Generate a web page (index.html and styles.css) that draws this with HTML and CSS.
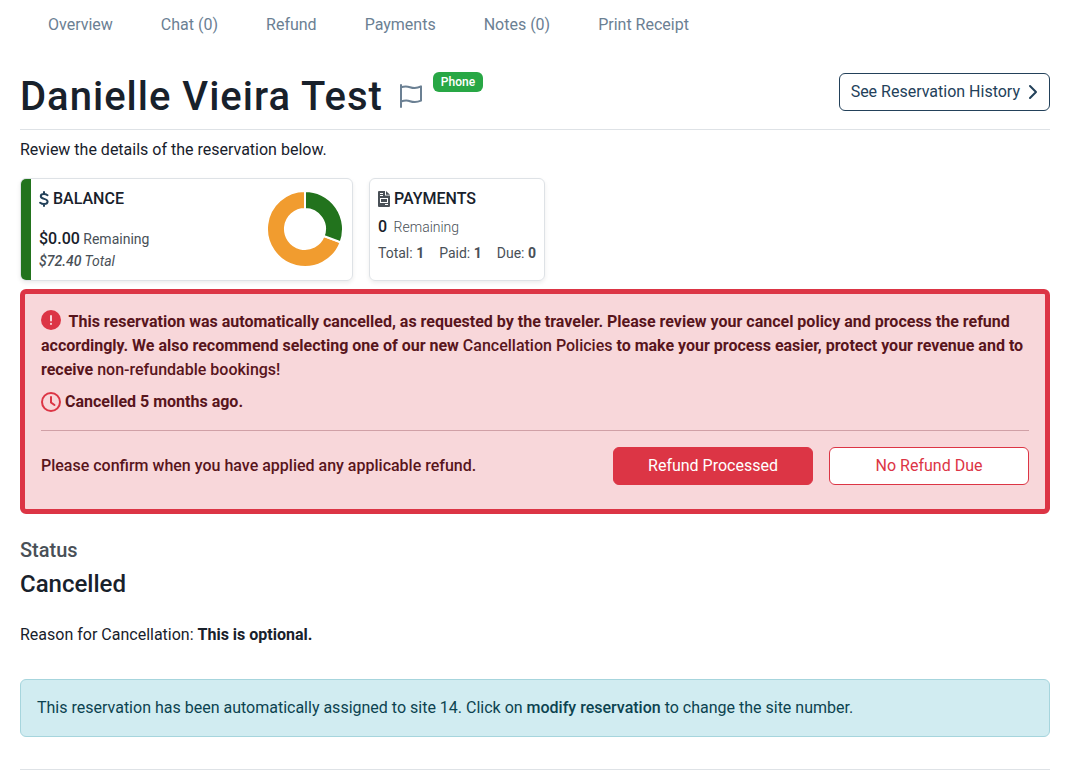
FILE: index.html
```html
<!DOCTYPE html>
<html lang="en">
<head>
    <meta charset="UTF-8">
    <meta name="viewport" content="width=device-width, initial-scale=1">
    <title>Reservation Overview</title>
    <link rel="stylesheet" href="styles.css">
</head>
<body>
    <nav class="tabs">
        <a href="#overview">Overview</a>
        <a href="#chat">Chat (0)</a>
        <a href="#refund">Refund</a>
        <a href="#payments">Payments</a>
        <a href="#notes">Notes (0)</a>
        <a href="#receipt">Print Receipt</a>
    </nav>

    <main class="page">
        <header class="page-header">
            <h1>Danielle Vieira Test</h1>
            <button type="button" class="flag-btn" aria-label="Flag guest">
                <svg width="24" height="26" viewBox="0 0 24 26" fill="none" stroke="currentColor" stroke-width="2" stroke-linecap="round" stroke-linejoin="round">
                    <path d="M2 2v22M2 4.300c3-1 5.500-1.300 9-.1 4.500 1.500 7.500 1 11-.8v14.300c-4 1.800-7 2-11 .5-3-1.100-6-.7-9 .3"/>
                </svg>
            </button>
            <span class="badge">Phone</span>
            <a href="#history" class="btn btn-outline history">
                See Reservation History
                <svg width="10" height="16" viewBox="0 0 10 16" fill="none" stroke="currentColor" stroke-width="2" stroke-linecap="round" stroke-linejoin="round">
                    <path d="M2 2l6 6-6 6"/>
                </svg>
            </a>
        </header>
        <p class="intro">Review the details of the reservation below.</p>

        <div class="cards">
            <section class="card balance">
                <div class="card-text">
                    <h2>
                        <svg class="dollar" width="10" height="16" viewBox="0 0 10 16" fill="none" stroke="currentColor" stroke-width="2" stroke-linecap="round">
                            <path d="M5 1v2M5 13v2M8.500 4.200C7.500 3.500 6.200 3 5 3 3.200 3 1.800 3.800 1.800 5.300c0 3.400 6.800 1.800 6.800 5.200C8.600 12.200 7 13 5 13c-1.500 0-2.900-.6-3.800-1.300"/>
                        </svg>
                        BALANCE
                    </h2>
                    <p class="amount"><strong>$0.00</strong> Remaining</p>
                    <p class="total"><em><strong>$72.40</strong> Total</em></p>
                </div>
                <svg class="donut" width="76" height="76" viewBox="0 0 76 76">
                    <path fill="#f19c2f" stroke="#fff" stroke-width="2" d="M38 0A38 38 0 1 0 73.600 51.300L56.700 45A20 20 0 1 1 38 18z"/>
                    <path fill="#22731d" stroke="#fff" stroke-width="2" d="M38 0A38 38 0 0 1 73.600 51.300L56.700 45A20 20 0 0 0 38 18z"/>
                </svg>
            </section>
            <section class="card payments">
                <h2>
                    <svg class="invoice" width="12" height="16" viewBox="0 0 12 16">
                        <path fill="currentColor" fill-rule="evenodd" d="M1 0h6v4.500h5V15a1 1 0 0 1-1 1H1a1 1 0 0 1-1-1V1a1 1 0 0 1 1-1zM2 2v1h3V2zM2 4v1h3V4zM2 7v5h8V7zM3 8h6v3H3zM7 13v1h3v-1z"/>
                        <path fill="currentColor" d="M8 0l4 3.700H8z"/>
                    </svg>
                    PAYMENTS
                </h2>
                <p class="count"><strong>0</strong> <span>Remaining</span></p>
                <p class="stats">
                    <span>Total: <strong>1</strong></span>
                    <span>Paid: <strong>1</strong></span>
                    <span>Due: <strong>0</strong></span>
                </p>
            </section>
        </div>

        <section class="alert alert-danger">
            <p>
                <svg class="exclaim" width="20" height="20" viewBox="0 0 20 20">
                    <circle cx="10" cy="10" r="10" fill="#dc3545"/>
                    <path d="M10 6v4.500M10 13.800v.2" stroke="#f8d7da" stroke-width="2" stroke-linecap="round"/>
                </svg>
                This reservation was automatically cancelled, as requested by the traveler. Please review your cancel policy and process the refund accordingly. We also recommend selecting one of our new <a href="#policies">Cancellation Policies</a> to make your process easier, protect your revenue and to receive <a href="#non-refundable">non-refundable bookings!</a>
            </p>
            <p class="when">
                <svg width="20" height="20" viewBox="0 0 20 20" fill="none" stroke="#dc3545" stroke-width="2" stroke-linecap="round">
                    <circle cx="10" cy="10" r="9"/>
                    <path d="M10 5v5.500l3.500 2.500"/>
                </svg>
                Cancelled 5 months ago.
            </p>
            <div class="confirm">
                <p>Please confirm when you have applied any applicable refund.</p>
                <button type="button" class="btn btn-danger">Refund Processed</button>
                <button type="button" class="btn btn-outline-danger">No Refund Due</button>
            </div>
        </section>

        <section class="status">
            <h2>Status</h2>
            <p class="state">Cancelled</p>
            <p>Reason for Cancellation: <strong>This is optional.</strong></p>
        </section>

        <div class="alert alert-info">
            This reservation has been automatically assigned to site 14. Click on <a href="#modify">modify reservation</a> to change the site number.
        </div>
        <hr>
    </main>
</body>
</html>
```

FILE: styles.css
```css
* {
    box-sizing: border-box;
}
body {
    color: #18212b;
    background-color: #fff;
    font-family: Roboto, Arial, sans-serif;
    font-size: 16px;
    line-height: 24px;
    margin: 0;
}
h1, h2, p {
    margin: 0;
}
h1, h2 {
    font-weight: 500;
}
a {
    color: inherit;
    text-decoration: none;
}
svg {
    flex: none;
}
.tabs {
    color: #6b8093;
    display: flex;
    gap: 48px;
    padding: 13px 48px 11px;
}
.page {
    padding: 24px 20px 0;
}
.page-header {
    align-items: flex-start;
    border-bottom: 1px solid #dee2e6;
    display: flex;
    padding-bottom: 8px;
}
h1 {
    font-size: 40px;
    letter-spacing: 1px;
    line-height: 48px;
    padding-top: 1px;
}
.flag-btn {
    background: none;
    border: 0;
    color: #6b8093;
    height: 26px;
    margin: 11px 10px 0 16px;
    padding: 0;
}
.badge {
    background-color: #28a745;
    border-radius: 6px;
    color: #fff;
    font-size: 12px;
    font-weight: 500;
    line-height: 12px;
    padding: 4px 8px;
}
.btn {
    border: 1px solid;
    border-radius: 6px;
    font-family: inherit;
    font-size: 16px;
    line-height: 24px;
    padding: 6px 12px;
}
.btn-outline {
    color: #23415a;
}
.history {
    align-items: center;
    display: flex;
    gap: 8px;
    margin-top: 1px;
    margin-left: auto;
    padding: 6px 11px;
}
.intro {
    padding: 8px 0 16px;
}
.cards {
    align-items: stretch;
    display: flex;
    gap: 16px;
    margin-bottom: 8px;
}
.card {
    border: 1px solid #dee2e6;
    border-radius: 6px;
    box-shadow: 0 2px 4px rgba(0, 0, 0, 0.075);
    padding: 8px;
}
.card h2 {
    align-items: center;
    display: flex;
    font-size: 16px;
    gap: 4px;
    line-height: 24px;
}
.card p {
    color: #495057;
    font-size: 14px;
}
.card strong {
    font-weight: 500;
}
.balance {
    display: flex;
    flex: 0 1 333px;
    justify-content: space-between;
    overflow: hidden;
    padding-left: 0;
}
.balance::before {
    background-color: #22731d;
    content: "";
    margin: -8px 8px -8px 0;
    width: 10px;
}
.card-text {
    flex: 1;
}
.dollar {
    color: #23415a;
}
.card .amount {
    line-height: 24px;
    margin-top: 16px;
}
.amount strong, .count strong {
    color: #18212b;
    font-size: 16px;
}
.card .total {
    line-height: 21px;
}
.donut {
    margin: 4px 1px 0 0;
}
.invoice {
    color: #495057;
}
.card .count {
    line-height: 24px;
    margin-top: 4px;
}
.count span {
    font-weight: 300;
    margin-left: 3px;
}
.stats {
    display: flex;
    gap: 15px;
    line-height: 24px;
    margin-top: 2px;
}
.card .stats {
    margin-top: 2px;
}
.card .stats strong {
    font-weight: 700;
}
.alert {
    border: 1px solid;
    border-radius: 6px;
    padding: 16px;
}
.alert-danger {
    background-color: #f8d7da;
    border: 5px solid #dc3545;
    color: #58151c;
    font-weight: 700;
    padding-bottom: 24px;
}
.alert-danger a {
    font-weight: 500;
}
.exclaim {
    margin-right: 4px;
    vertical-align: -3px;
}
.when {
    align-items: center;
    display: flex;
    gap: 4px;
    margin-top: 8px;
}
.confirm {
    align-items: center;
    border-top: 1px solid #d0a0a6;
    display: flex;
    gap: 16px;
    margin-top: 16px;
    padding-top: 16px;
}
.confirm p {
    flex: 1;
    font-weight: 500;
}
.confirm .btn {
    width: 200px;
}
.btn-danger {
    background-color: #dc3545;
    border-color: #dc3545;
    color: #fff;
}
.btn-outline-danger {
    background-color: #fff;
    color: #dc3545;
}
.status {
    padding: 24px 0 32px;
}
.status h2 {
    color: #495057;
    font-size: 20px;
}
.state {
    font-size: 24px;
    font-weight: 500;
    line-height: 29px;
    margin: 8px 0 24px;
}
.alert-info {
    background-color: #d1ecf1;
    border-color: #a6d5dd;
    color: #0c4350;
    padding-bottom: 16px;
}
.alert-info a {
    font-weight: 500;
}
hr {
    border: 0;
    border-top: 1px solid #dee2e6;
    margin: 32px 0 0;
}
```
